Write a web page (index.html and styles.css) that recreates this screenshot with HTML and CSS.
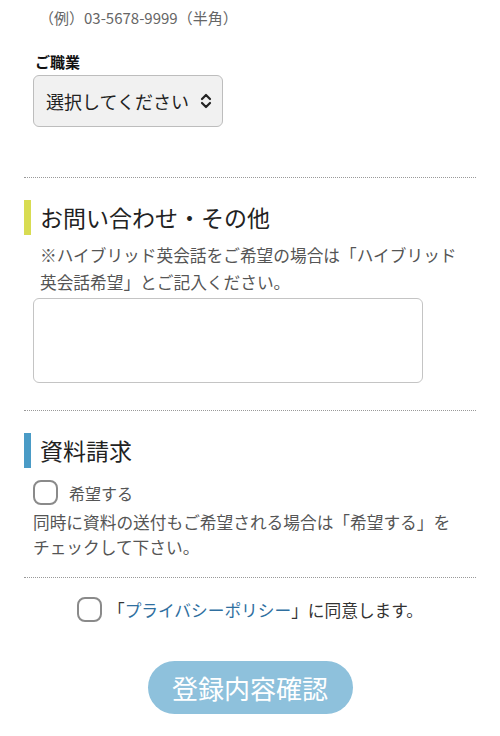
FILE: index.html
```html
<!DOCTYPE html>
<html lang="ja">
<head>
    <meta charset="UTF-8">
    <meta name="viewport" content="width=device-width, initial-scale=1.0">
    <title>お問い合わせ</title>
    <link rel="stylesheet" href="styles.css">
</head>
<body>
    <div class="form">
        <p class="hint">（例）03-5678-9999（半角）</p>

        <!-- ご職業 -->
        <p class="field-label">ご職業</p>
        <div class="select-wrap">
            <select class="select">
                <option>選択してください</option>
                <option>会社員</option>
                <option>学生</option>
                <option>その他</option>
            </select>
            <svg class="select-arrow" width="12" height="16" viewBox="0 0 12 16">
                <path d="M2 6 L6 2 L10 6 M2 10 L6 14 L10 10" fill="none" stroke="#222" stroke-width="2.2" stroke-linecap="round" stroke-linejoin="round"/>
            </svg>
        </div>

        <hr class="divider after-select">

        <!-- お問い合わせ -->
        <h2 class="section-title yellow">お問い合わせ・その他</h2>
        <p class="note">※ハイブリッド英会話をご希望の場合は「ハイブリッド英会話希望」とご記入ください。</p>
        <textarea class="textarea"></textarea>

        <hr class="divider after-textarea">

        <!-- 資料請求 -->
        <h2 class="section-title blue">資料請求</h2>
        <label class="check-row">
            <input type="checkbox" class="check">
            <span class="check-label">希望する</span>
        </label>
        <p class="note-plain">同時に資料の送付もご希望される場合は「希望する」をチェックして下さい。</p>

        <hr class="divider after-note">

        <label class="check-row privacy">
            <input type="checkbox" class="check">
            <span class="privacy-text">「<a href="#" class="link">プライバシーポリシー</a>」に同意します。</span>
        </label>

        <div class="submit-wrap">
            <button class="submit">登録内容確認</button>
        </div>
    </div>
</body>
</html>
```

FILE: styles.css
```css
body {
    margin: 0;
    background-color: #ffffff;
    color: #222;
    font-family: "Noto Sans CJK JP", "Noto Sans", sans-serif;
}
.form {
    padding: 0 24px;
}
.hint {
    margin: 8px 0 0;
    padding-left: 15px;
    font-size: 15px;
    line-height: 20px;
    color: #666;
}
.field-label {
    margin: 24px 0 0;
    padding-left: 11px;
    font-size: 15px;
    line-height: 20px;
    font-weight: bold;
    color: #111;
}
.select-wrap {
    position: relative;
    width: 190px;
    margin: 3px 0 0 9px;
}
.select {
    appearance: none;
    -webkit-appearance: none;
    width: 190px;
    height: 52px;
    padding: 0 0 0 12px;
    border: 1px solid #bdbdbd;
    border-radius: 6px;
    background-color: #f1f1f1;
    font-family: inherit;
    font-size: 18px;
    color: #222;
}
.select-arrow {
    position: absolute;
    right: 11px;
    top: 18px;
    pointer-events: none;
}
.divider {
    margin: 0;
    border: none;
    border-top: 1px dotted #999;
}
.after-select {
    margin-top: 50px;
}
.after-textarea {
    margin-top: 27px;
}
.after-note {
    margin-top: 17px;
}
.section-title {
    margin: 22px 0 0;
    padding-left: 9px;
    font-size: 23px;
    line-height: 35px;
    font-weight: normal;
    color: #222;
}
.yellow {
    border-left: 7px solid #d8dc52;
}
.blue {
    border-left: 7px solid #4a9bc6;
}
.note {
    margin: 7px 0 0;
    padding-left: 16px;
    max-width: 424px;
    font-size: 16.7px;
    line-height: 27px;
    color: #555;
}
.textarea {
    display: block;
    width: 390px;
    height: 85px;
    margin: 2px 0 0 9px;
    box-sizing: border-box;
    border: 1px solid #c4c4c4;
    border-radius: 6px;
    resize: none;
}
.check-row {
    display: flex;
    align-items: center;
    margin: 12px 0 0 9px;
}
.check {
    appearance: none;
    -webkit-appearance: none;
    width: 25px;
    height: 25px;
    margin: 0;
    box-sizing: border-box;
    border: 2px solid #8a8a8a;
    border-radius: 8px;
    background: #fff;
}
.check-label {
    margin-left: 11px;
    font-size: 16px;
    color: #555;
}
.note-plain {
    margin: 5px 0 0 9px;
    max-width: 425px;
    font-size: 16.7px;
    line-height: 25px;
    color: #555;
}
.privacy {
    justify-content: center;
    margin: 19px 0 0;
}
.privacy-text {
    margin-left: 6px;
    font-size: 16.7px;
    color: #333;
}
.link {
    color: #2f6f9f;
    text-decoration: none;
}
.submit-wrap {
    display: flex;
    justify-content: center;
    margin-top: 39px;
}
.submit {
    width: 205px;
    height: 53px;
    border: none;
    border-radius: 27px;
    background-color: #8ec1dc;
    color: #ffffff;
    font-family: inherit;
    font-size: 26px;
}
```
